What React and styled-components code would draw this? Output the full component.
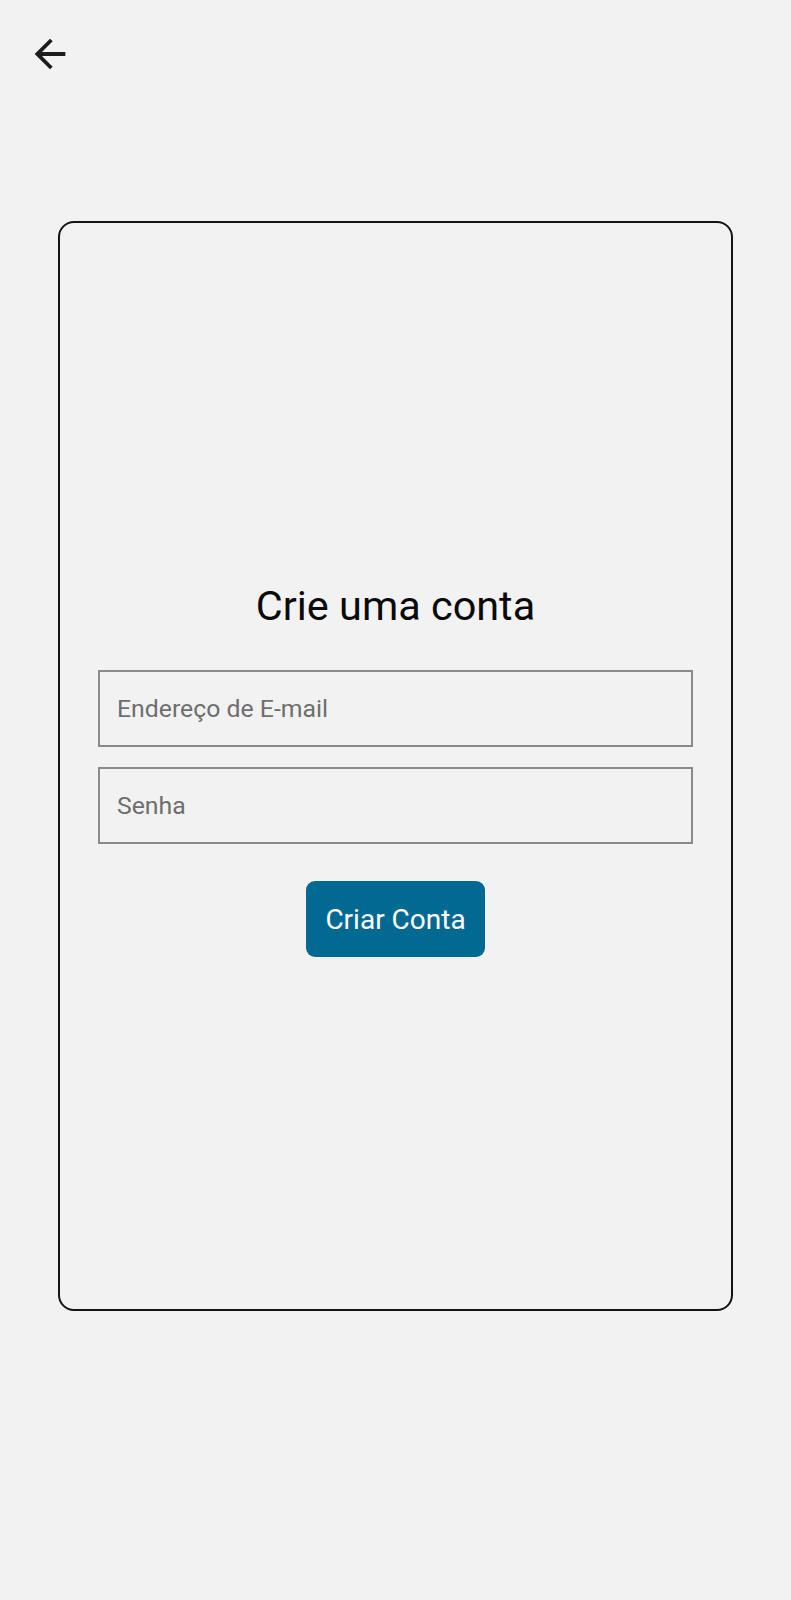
import React from 'react';
import styled, { createGlobalStyle } from 'styled-components';

const GlobalStyle = createGlobalStyle`
    body {
        margin: 0;
        background-color: #F2F2F2;
        font-family: Roboto, "Liberation Sans", sans-serif;
    }
`

const Screen = styled.div`
    min-height: 1600px;
    display: flex;
    flex-direction: column;
    background-color: #F2F2F2;
`

const TopBar = styled.div`
    height: 221px;
    padding: 31px 0 0 27px;
    box-sizing: border-box;
`

const BackButton = styled.button`
    width: 46px;
    height: 46px;
    padding: 0;
    border: none;
    background: transparent;
    color: #1C1C1C;
    cursor: pointer;
    display: flex;
    svg {
        width: 46px;
        height: 46px;
    }
`

const Card = styled.div`
    margin: 0 58px;
    height: 1090px;
    box-sizing: border-box;
    border: 2px solid #141414;
    border-radius: 16px;
    display: flex;
    flex-direction: column;
    align-items: center;
    justify-content: center;
    padding-top: 6px;
`

const Title = styled.h1`
    margin: 0 0 39px 0;
    font-size: 41.4px;
    line-height: 50px;
    font-weight: 400;
    color: #0A0A0A;
`

const Form = styled.form`
    display: flex;
    flex-direction: column;
    align-items: center;
`

const Field = styled.input`
    width: 595px;
    height: 77px;
    box-sizing: border-box;
    margin-bottom: ${props => props.last ? '37px' : '20px'};
    padding: 0 17px;
    border: 2px solid #8A8A8A;
    border-radius: 0;
    background: transparent;
    font-family: Roboto, "Liberation Sans", sans-serif;
    font-size: 24.8px;
    color: #333;
    outline: none;
    &::placeholder {
        color: #6E6E6E;
    }
`

const SubmitButton = styled.button`
    width: 179px;
    height: 76px;
    border: none;
    border-radius: 9px;
    background-color: #026993;
    color: #FFFFFF;
    font-family: Roboto, "Liberation Sans", sans-serif;
    font-size: 28px;
    cursor: pointer;
`

const App = () => {
    return (
        <Screen>
            <GlobalStyle />
            <TopBar>
                <BackButton aria-label="Voltar">
                    <svg viewBox="0 0 24 24" fill="currentColor">
                        <path d="M20 11H7.83l5.59-5.59L12 4l-8 8 8 8 1.41-1.41L7.83 13H20v-2z" />
                    </svg>
                </BackButton>
            </TopBar>
            <Card>
                <Title>Crie uma conta</Title>
                <Form onSubmit={e => e.preventDefault()}>
                    <Field type="email" placeholder="Endereço de E-mail" />
                    <Field type="password" placeholder="Senha" last />
                    <SubmitButton type="submit">Criar Conta</SubmitButton>
                </Form>
            </Card>
        </Screen>
    )
};

export default App;
